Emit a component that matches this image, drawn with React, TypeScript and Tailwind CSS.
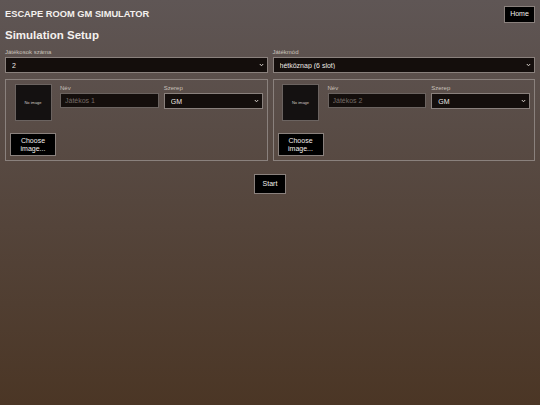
import React from "react";

const font = { fontFamily: '"Liberation Sans", Arial, sans-serif' };

function Chevron() {
  return (
    <svg
      className="pointer-events-none absolute right-[4px] top-1/2 -translate-y-1/2"
      width="5"
      height="4"
      viewBox="0 0 5 4"
    >
      <path d="M0.8 1 L2.5 2.8 L4.2 1" stroke="#d8d2cc" strokeWidth="1" fill="none" />
    </svg>
  );
}

function Select({ value, options }: { value: string; options: string[] }) {
  return (
    <div className="relative">
      <select
        defaultValue={value}
        className="block h-[16px] w-full appearance-none border border-[#8a817d] bg-[#140e0c] pl-[6px] text-[7px] leading-none text-[#ece8e4] outline-none"
      >
        {options.map((o) => (
          <option key={o}>{o}</option>
        ))}
      </select>
      <Chevron />
    </div>
  );
}

function PlayerCard({ n }: { n: number }) {
  return (
    <div className="flex gap-[4px] border border-[#8a817d] p-[4px]">
      <div className="flex w-[46px] shrink-0 flex-col items-center gap-[12px]">
        <div className="flex h-[37px] w-[37px] items-center justify-center border border-[#6b6360] bg-[#141111] text-[4px] text-[#cfc8c2]">
          No image
        </div>
        <button className="flex h-[23px] w-[46px] items-center justify-center border border-[#8a817d] bg-black text-center text-[7px] leading-[8px] text-[#f2efec]">
          Choose
          <br />
          image...
        </button>
      </div>
      <div className="grid flex-1 grid-cols-2 content-start gap-x-[5px]">
        <label className="flex flex-col">
          <span className="mb-[2px] mt-[1px] text-[6px] leading-[6px] text-[#c9c1ba]">Név</span>
          <input
            placeholder={`Játékos ${n}`}
            className="h-[15px] w-full border border-[#6b6360] bg-[#140e0c] pl-[4px] text-[7px] text-[#ece8e4] outline-none placeholder:text-[#746b66]"
          />
        </label>
        <label className="flex flex-col">
          <span className="mb-[2px] mt-[1px] text-[6px] leading-[6px] text-[#c9c1ba]">Szerep</span>
          <Select value="GM" options={["GM", "Játékos"]} />
        </label>
      </div>
    </div>
  );
}

export default function App() {
  return (
    <div
      style={font}
      className="min-h-[405px] w-full bg-gradient-to-b from-[#5f5655] to-[#4b3625] px-[5px] pt-[6px] text-[#f0ece8]"
    >
      <header className="flex items-center justify-between">
        <h1 className="text-[9.3px] font-bold text-[#f4f1ee]">ESCAPE ROOM GM SIMULATOR</h1>
        <button className="h-[17px] w-[31px] border border-[#8a817d] bg-black text-[7px] text-[#f2efec]">Home</button>
      </header>

      <h2 className="mt-[6px] text-[11.5px] font-bold leading-[13px] text-[#f4f1ee]">Simulation Setup</h2>

      <div className="mt-[7px] grid grid-cols-2 gap-x-[5px]">
        <label className="flex flex-col">
          <span className="mb-[2px] text-[6px] leading-[6px] text-[#c9c1ba]">Játékosok száma</span>
          <Select value="2" options={["1", "2", "3", "4"]} />
        </label>
        <label className="flex flex-col">
          <span className="mb-[2px] text-[6px] leading-[6px] text-[#c9c1ba]">Játékmód</span>
          <Select value="hétköznap (6 slot)" options={["hétköznap (6 slot)", "hétvége (8 slot)"]} />
        </label>
      </div>

      <div className="mt-[6px] grid grid-cols-2 gap-x-[5px]">
        <PlayerCard n={1} />
        <PlayerCard n={2} />
      </div>

      <div className="mt-[13px] flex justify-center">
        <button className="h-[20px] w-[32px] border border-[#8a817d] bg-black text-[7px] text-[#f2efec]">Start</button>
      </div>
    </div>
  );
}
